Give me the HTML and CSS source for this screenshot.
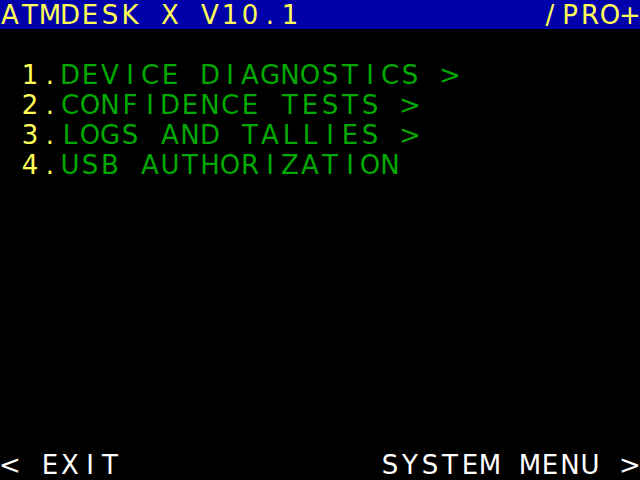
FILE: index.html
```html
<!DOCTYPE html>
<html lang="en">
<head>
    <meta charset="UTF-8">
    <title>ATMDESK X</title>
    <link rel="stylesheet" href="styles.css">
</head>
<body>
    <div class="screen">
        <div class="row titlebar">
            <span class="cells">ATMDESK X V10.1</span>
            <span class="cells">/PRO+</span>
        </div>

        <div class="menu">
            <div class="row item"><span class="cells num">1.</span><span class="cells">DEVICE DIAGNOSTICS &gt;</span></div>
            <div class="row item"><span class="cells num">2.</span><span class="cells">CONFIDENCE TESTS &gt;</span></div>
            <div class="row item"><span class="cells num">3.</span><span class="cells">LOGS AND TALLIES &gt;</span></div>
            <div class="row item"><span class="cells num">4.</span><span class="cells">USB AUTHORIZATION</span></div>
        </div>

        <div class="row footer">
            <span class="cells">&lt; EXIT</span>
            <span class="cells">SYSTEM MENU &gt;</span>
        </div>
    </div>

    <script src="script.js"></script>
</body>
</html>
```

FILE: styles.css
```css
html, body {
    margin: 0;
    background: #000;
}

.screen {
    width: 640px;
    height: 480px;
    display: flex;
    flex-direction: column;
    font-family: "DejaVu Sans", sans-serif;
    font-size: 26px;
    line-height: 30px;
    color: #fff;
    overflow: hidden;
}

.row {
    display: flex;
    height: 30px;
}

.titlebar {
    height: 29px;
    margin-bottom: 1px;
    justify-content: space-between;
    background: #0000aa;
    color: #ffff55;
}

.menu {
    margin-top: 30px;
    flex: 1;
}

.item {
    padding-left: 20px;
    color: #00aa00;
}

.item .num {
    color: #ffff55;
}

.footer {
    justify-content: space-between;
    color: #fff;
}

.cells {
    display: flex;
}

/* one glyph per 20px cell, centred like a text-mode screen */
.cell {
    width: 20px;
    display: flex;
    justify-content: center;
    white-space: pre;
}
```

FILE: script.js
```js
// split every label into fixed 20px character cells
document.querySelectorAll('.cells').forEach(el => {
    const text = el.textContent
    el.textContent = ''
    for (const ch of text) {
        const c = document.createElement('span')
        c.className = 'cell'
        c.textContent = ch
        el.appendChild(c)
    }
})
```
